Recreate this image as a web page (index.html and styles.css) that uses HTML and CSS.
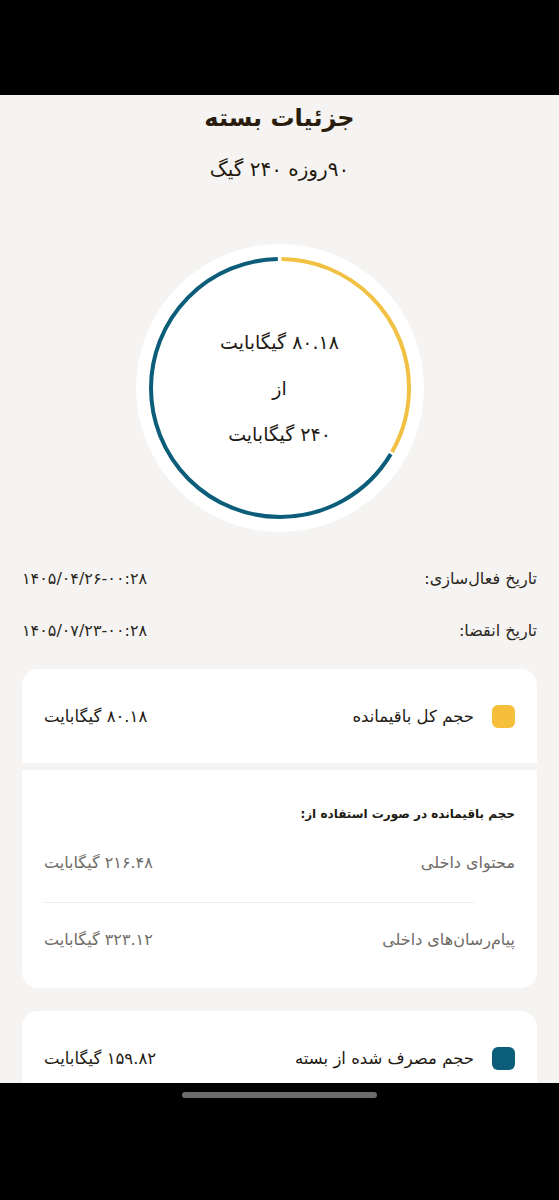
FILE: index.html
```html
<!DOCTYPE html>
<html lang="fa" dir="rtl">
<head>
    <meta charset="UTF-8">
    <meta name="viewport" content="width=device-width, initial-scale=1.0">
    <title>جزئیات بسته</title>
    <link rel="stylesheet" href="styles.css">
</head>
<body>

    <div class="status-bar"></div>

    <main class="screen">
        <h1 class="page-title">جزئیات بسته</h1>
        <p class="package-name">۹۰روزه ۲۴۰ گیگ</p>

        <!-- Usage ring -->
        <div class="usage-chart">
            <svg class="ring" width="288" height="288" viewBox="0 0 288 288">
                <circle cx="144" cy="144" r="144" fill="#ffffff"/>
                <circle class="ring-used" cx="144" cy="144" r="129" fill="none" stroke-width="4"
                        stroke-dasharray="536 810.5" stroke-dashoffset="-272" transform="rotate(-90 144 144)"/>
                <circle class="ring-left" cx="144" cy="144" r="129" fill="none" stroke-width="4"
                        stroke-dasharray="268 810.5" stroke-dashoffset="-1.5" transform="rotate(-90 144 144)"/>
            </svg>
            <div class="ring-text">
                <span>۸۰.۱۸ گیگابایت</span>
                <span>از</span>
                <span>۲۴۰ گیگابایت</span>
            </div>
        </div>

        <!-- Dates -->
        <div class="dates">
            <div class="date-row">
                <span class="date-label">تاریخ فعال‌سازی:</span>
                <span class="date-value">۱۴۰۵/۰۴/۲۶-۰۰:۲۸</span>
            </div>
            <div class="date-row">
                <span class="date-label">تاریخ انقضا:</span>
                <span class="date-value">۱۴۰۵/۰۷/۲۳-۰۰:۲۸</span>
            </div>
        </div>

        <!-- Remaining volume card -->
        <section class="card">
            <div class="card-head">
                <span class="swatch swatch-yellow"></span>
                <span class="card-label">حجم کل باقیمانده</span>
                <span class="card-value">۸۰.۱۸ گیگابایت</span>
            </div>
            <div class="card-body">
                <h2 class="body-title">حجم باقیمانده در صورت استفاده از:</h2>
                <div class="sub-row">
                    <span>محتوای داخلی</span>
                    <span>۲۱۶.۴۸ گیگابایت</span>
                </div>
                <div class="sub-divider"></div>
                <div class="sub-row">
                    <span>پیام‌رسان‌های داخلی</span>
                    <span>۳۲۳.۱۲ گیگابایت</span>
                </div>
            </div>
        </section>

        <!-- Used volume card -->
        <section class="card">
            <div class="card-head">
                <span class="swatch swatch-teal"></span>
                <span class="card-label">حجم مصرف شده از بسته</span>
                <span class="card-value">۱۵۹.۸۲ گیگابایت</span>
            </div>
        </section>
    </main>

    <div class="nav-bar">
        <span class="home-indicator"></span>
    </div>

</body>
</html>
```

FILE: styles.css
```css
/* Basic Reset */
* {
    margin: 0;
    padding: 0;
    box-sizing: border-box;
}

body {
    font-family: 'DejaVu Sans', 'Noto Sans', sans-serif;
    background-color: #000000;
    color: #24190c;
    width: 559px;
    height: 1200px;
    overflow: hidden;
}

/* System bars */
.status-bar {
    height: 95px;
    background-color: #000000;
}

.nav-bar {
    height: 117px;
    background-color: #000000;
    display: flex;
    justify-content: center;
    padding-top: 9px;
}

.home-indicator {
    width: 195px;
    height: 6px;
    border-radius: 3px;
    background-color: #6b6b6b;
}

/* Main screen */
.screen {
    height: 988px;
    background-color: #f5f4f2;
    overflow: hidden;
    padding: 0 22px;
}

.page-title {
    text-align: center;
    font-size: 24px;
    font-weight: bold;
    line-height: 46px;
    color: #2b1d0e;
}

.package-name {
    text-align: center;
    font-size: 20px;
    line-height: 40px;
    margin-top: 8px;
}

/* Usage ring */
.usage-chart {
    display: grid;
    justify-items: center;
    align-items: center;
    margin-top: 55px;
}

.ring,
.ring-text {
    grid-area: 1 / 1;
}

.ring-used {
    stroke: #0b5d7a;
}

.ring-left {
    stroke: #f2c144;
}

.ring-text {
    display: flex;
    flex-direction: column;
    align-items: center;
    gap: 20px;
    font-size: 19px;
    line-height: 26px;
    color: #1e1a14;
}

/* Dates */
.dates {
    display: flex;
    flex-direction: column;
    gap: 28px;
    margin-top: 35px;
}

.date-row {
    display: flex;
    justify-content: space-between;
    align-items: center;
    font-size: 16px;
    line-height: 24px;
    color: #2a2620;
}

.date-value {
    direction: ltr;
    unicode-bidi: isolate;
}

/* Cards */
.card {
    display: flex;
    flex-direction: column;
    gap: 7px;
    margin-top: 26px;
    border-radius: 16px;
    overflow: hidden;
}

.card + .card {
    margin-top: 23px;
}

.card-head {
    background-color: #ffffff;
    height: 94px;
    display: flex;
    align-items: center;
    padding: 0 22px;
    font-size: 16.5px;
    color: #1e1a14;
}

.swatch {
    width: 23px;
    height: 23px;
    border-radius: 6px;
    margin-left: 18px;
}

.swatch-yellow {
    background-color: #f5bf3a;
}

.swatch-teal {
    background-color: #0b5d7a;
}

.card-value {
    margin-right: auto;
}

.card-body {
    background-color: #ffffff;
    padding: 31px 22px 35px;
}

.body-title {
    font-size: 12px;
    font-weight: bold;
    line-height: 26px;
    color: #1e1a14;
}

.sub-row {
    display: flex;
    justify-content: space-between;
    align-items: center;
    font-size: 16px;
    line-height: 26px;
    color: #6f6c68;
    margin-top: 23px;
}

.sub-divider {
    height: 1px;
    background-color: #eeeeee;
    margin: 26px 40px 0 0;
}

.sub-divider + .sub-row {
    margin-top: 24px;
}
```
